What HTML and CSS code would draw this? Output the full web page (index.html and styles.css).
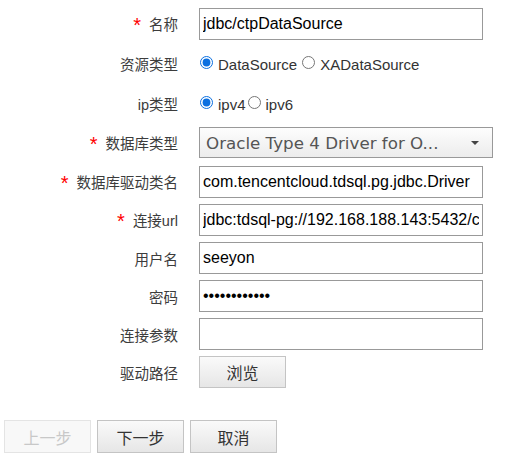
FILE: index.html
```html
<!DOCTYPE html>
<html lang="zh-CN">
<head>
  <meta charset="UTF-8" />
  <title>数据源配置</title>
  <link rel="stylesheet" href="styles.css">
</head>
<body>
  <form class="ds-form">
    <div class="form-row">
      <label class="form-label"><span class="req">*</span>名称</label>
      <input class="text-field" type="text" value="jdbc/ctpDataSource">
    </div>

    <div class="form-row radio-row">
      <label class="form-label">资源类型</label>
      <div class="radio-group">
        <label class="radio-item"><input type="radio" name="res_type" checked>DataSource</label>
        <label class="radio-item"><input type="radio" name="res_type">XADataSource</label>
      </div>
    </div>

    <div class="form-row radio-row">
      <label class="form-label">ip类型</label>
      <div class="radio-group tight">
        <label class="radio-item"><input type="radio" name="ip_type" checked>ipv4</label>
        <label class="radio-item"><input type="radio" name="ip_type">ipv6</label>
      </div>
    </div>

    <div class="form-row row-39">
      <label class="form-label"><span class="req">*</span>数据库类型</label>
      <div class="select-box">
        <span class="select-text">Oracle Type 4 Driver for O...</span>
        <span class="select-arrow"></span>
      </div>
    </div>

    <div class="form-row row-39">
      <label class="form-label"><span class="req">*</span>数据库驱动类名</label>
      <input class="text-field" type="text" value="com.tencentcloud.tdsql.pg.jdbc.Driver">
    </div>

    <div class="form-row">
      <label class="form-label"><span class="req">*</span>连接url</label>
      <input class="text-field" type="text" value="jdbc:tdsql-pg://192.168.188.143:5432/ctp">
    </div>

    <div class="form-row">
      <label class="form-label">用户名</label>
      <input class="text-field" type="text" value="seeyon">
    </div>

    <div class="form-row">
      <label class="form-label">密码</label>
      <input class="text-field" type="password" value="seeyon123456">
    </div>

    <div class="form-row">
      <label class="form-label">连接参数</label>
      <input class="text-field" type="text" value="">
    </div>

    <div class="form-row">
      <label class="form-label">驱动路径</label>
      <button type="button" class="btn">浏览</button>
    </div>

    <div class="form-actions">
      <button type="button" class="btn" disabled>上一步</button>
      <button type="button" class="btn">下一步</button>
      <button type="button" class="btn">取消</button>
    </div>
  </form>
</body>
</html>
```

FILE: styles.css
```css
body {
  margin: 0;
  background-color: #fff;
  font-family: "Liberation Sans", "Noto Sans CJK SC", sans-serif;
  color: #333;
}

.ds-form {
  padding: 5px 0 0 4px;
}

.form-row {
  display: flex;
  align-items: center;
  height: 38px;
}

.radio-row {
  height: 40px;
}

.row-39 {
  height: 39px;
}

.form-label {
  width: 174px;
  margin-right: 21px;
  text-align: right;
  font-family: "Liberation Sans", "Noto Sans CJK SC", sans-serif;
  font-size: 14.5px;
  color: #3c3c3c;
}

.req {
  color: #f00;
  font-family: "Liberation Sans", sans-serif;
  font-size: 20px;
  line-height: 1;
  margin-right: 8px;
  vertical-align: -2px;
}

.text-field {
  box-sizing: border-box;
  width: 284px;
  height: 32px;
  margin: 0;
  padding: 0 3px;
  border: 1px solid #999;
  border-radius: 0;
  font-family: "Liberation Sans", sans-serif;
  font-size: 16px;
  color: #000;
  outline: none;
}

.radio-group {
  display: flex;
  align-items: center;
  padding-top: 2px;
  font-size: 15px;
  color: #333;
}

.radio-item {
  display: flex;
  align-items: center;
}

/* radio dot sits a little higher than the label text */
.radio-item input {
  width: 13px;
  height: 13px;
  margin: 0 5px 3px 1px;
  accent-color: #0a6fe0;
}

.radio-item + .radio-item {
  margin-left: 4px;
}

.tight .radio-item + .radio-item {
  margin-left: 1px;
}

.select-box {
  box-sizing: border-box;
  display: flex;
  align-items: center;
  justify-content: space-between;
  width: 294px;
  height: 31px;
  padding: 0 13px 0 6px;
  border: 1px solid #999;
  background: linear-gradient(#fdfdfd, #ececec);
}

.select-text {
  font-family: "DejaVu Sans", sans-serif;
  font-size: 16.7px;
  color: #555;
}

.select-arrow {
  width: 0;
  height: 0;
  border-left: 4px solid transparent;
  border-right: 4px solid transparent;
  border-top: 4px solid #444;
}

.btn {
  box-sizing: border-box;
  width: 87px;
  height: 32px;
  padding: 0;
  border: 1px solid #c4c4c4;
  border-radius: 0;
  background: linear-gradient(#fafafa, #e6e6e6);
  font-family: "Noto Sans CJK SC", sans-serif;
  font-size: 16px;
  color: #333;
  cursor: pointer;
}

.btn:disabled {
  border-color: #e4e4e4;
  background: #f8f8f8;
  color: #c8c8c8;
  cursor: default;
}

.form-actions {
  display: flex;
  gap: 6px;
  margin-top: 29px;
}

.form-actions .btn {
  height: 33px;
}
```
